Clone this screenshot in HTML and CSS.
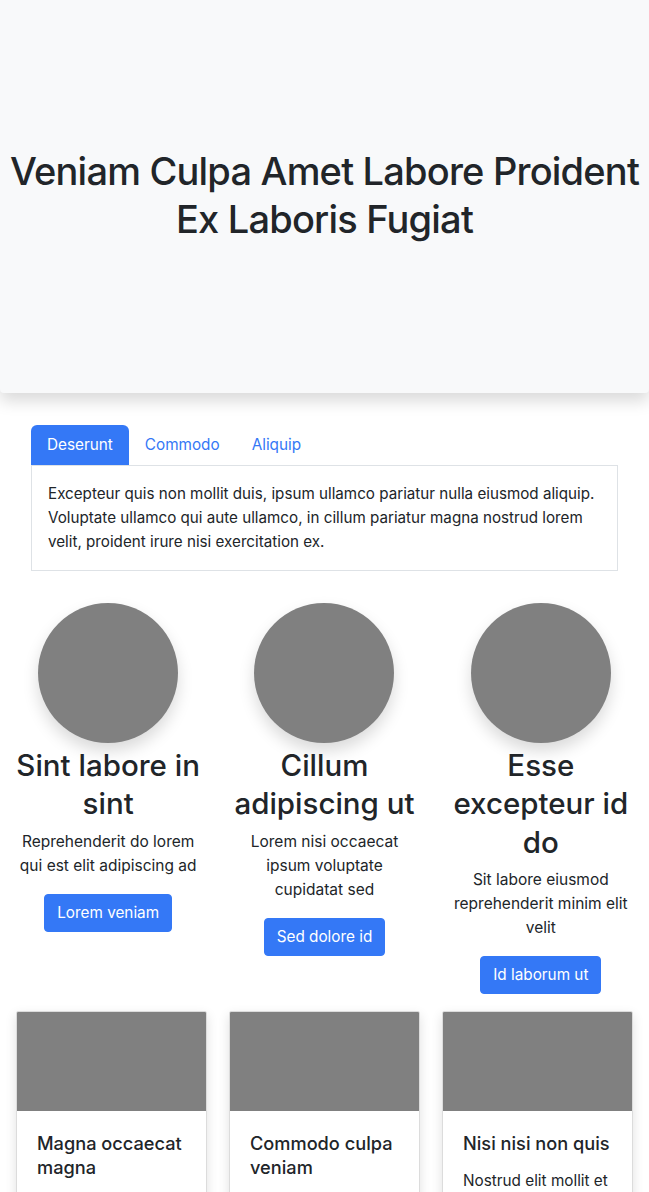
FILE: index.html
```html
<!DOCTYPE html>
<html lang="en">
<head>
<meta charset="utf-8">
<title>Veniam Culpa</title>
<link rel="stylesheet" href="styles.css">
</head>
<body>
<header class="hero">
  <h1 class="hero-title">Veniam Culpa Amet Labore Proident Ex Laboris Fugiat</h1>
</header>

<section class="tabs-section">
  <nav class="tabs">
    <a class="tab active" href="#">Deserunt</a>
    <a class="tab" href="#">Commodo</a>
    <a class="tab" href="#">Aliquip</a>
  </nav>
  <div class="tab-panel">
    Excepteur quis non mollit duis, ipsum ullamco pariatur nulla eiusmod aliquip. Voluptate ullamco qui aute ullamco, in cillum pariatur magna nostrud lorem velit, proident irure nisi exercitation ex.
  </div>
</section>

<section class="features">
  <div class="feature">
    <div class="avatar"></div>
    <h2 class="feature-title">Sint labore in sint</h2>
    <p class="feature-text">Reprehenderit do lorem qui est elit adipiscing ad</p>
    <a class="btn" href="#">Lorem veniam</a>
  </div>
  <div class="feature">
    <div class="avatar"></div>
    <h2 class="feature-title">Cillum adipiscing ut</h2>
    <p class="feature-text">Lorem nisi occaecat ipsum voluptate cupidatat sed</p>
    <a class="btn" href="#">Sed dolore id</a>
  </div>
  <div class="feature">
    <div class="avatar"></div>
    <h2 class="feature-title">Esse excepteur id do</h2>
    <p class="feature-text">Sit labore eiusmod reprehenderit minim elit velit</p>
    <a class="btn" href="#">Id laborum ut</a>
  </div>
</section>

<section class="cards">
  <article class="card">
    <div class="card-img"></div>
    <div class="card-body">
      <h5 class="card-title">Magna occaecat magna</h5>
      <p class="card-text">Ad ipsum cillum elit sed tempor</p>
    </div>
  </article>
  <article class="card">
    <div class="card-img"></div>
    <div class="card-body">
      <h5 class="card-title">Commodo culpa veniam</h5>
      <p class="card-text">Dolor amet sint lorem irure</p>
    </div>
  </article>
  <article class="card">
    <div class="card-img"></div>
    <div class="card-body">
      <h5 class="card-title">Nisi nisi non quis</h5>
      <p class="card-text">Nostrud elit mollit et laboris</p>
    </div>
  </article>
</section>
</body>
</html>
```

FILE: styles.css
```css
* { box-sizing: border-box; }

body {
  margin: 0;
  font-family: Inter, "Helvetica Neue", Arial, sans-serif;
  font-size: 15.3px;
  line-height: 1.5;
  color: #212529;
  background: #fff;
}

.hero {
  height: 393px;
  background: #f8f9fa;
  display: flex;
  align-items: center;
  justify-content: center;
  box-shadow: 0 8px 16px rgba(0, 0, 0, 0.15);
  border-radius: 0 0 4px 4px;
  padding: 0 4px 4px;
}

.hero-title {
  margin: 0;
  font-size: 38px;
  font-weight: 500;
  line-height: 48px;
  text-align: center;
  letter-spacing: -0.8px;
}

.tabs-section {
  margin: 32px 31px 0;
}

.tabs {
  display: flex;
}

.tab {
  display: block;
  padding: 8px 16px;
  line-height: 24px;
  color: #3478f6;
  text-decoration: none;
  border-radius: 6px 6px 0 0;
}

.tab.active {
  background: #3478f6;
  color: #fff;
}

.tab-panel {
  border: 1px solid #dee2e6;
  padding: 16px;
  font-size: 15.2px;
  line-height: 24px;
}

.features {
  display: grid;
  grid-template-columns: repeat(3, 1fr);
  margin-top: 32px;
}

.feature {
  padding: 0 12px;
  text-align: center;
  display: flex;
  flex-direction: column;
  align-items: center;
}

.avatar {
  width: 140px;
  height: 140px;
  border-radius: 50%;
  background: #808080;
  box-shadow: 0 8px 16px rgba(0, 0, 0, 0.15);
  margin-bottom: 3px;
}

.feature-title {
  margin: 0 0 7px;
  font-size: 29.5px;
  font-weight: 500;
  line-height: 38.4px;
}

.feature-text {
  margin: 0 0 16px;
  padding: 0 6px;
  font-size: 15.5px;
  line-height: 24px;
}

.btn {
  display: inline-block;
  padding: 6px 12px;
  line-height: 24px;
  font-size: 15.3px;
  color: #fff;
  background: #3478f6;
  border: 1px solid #3478f6;
  border-radius: 4px;
  text-decoration: none;
}

.cards {
  display: grid;
  grid-template-columns: repeat(3, 1fr);
  gap: 22px;
  padding: 0 16px;
  margin-top: 17px;
}

.card {
  border: 1px solid #dcdcdc;
  border-radius: 2px;
  background: #fff;
  box-shadow: 0 4px 12px rgba(0, 0, 0, 0.12);
  overflow: hidden;
}

.card-img {
  height: 99px;
  background: #808080;
}

.card-body {
  padding: 20px;
}

.card-title {
  margin: 0 0 14px;
  font-size: 18.2px;
  font-weight: 500;
  line-height: 24px;
}

.card-text {
  margin: 0;
  line-height: 24px;
}
```
